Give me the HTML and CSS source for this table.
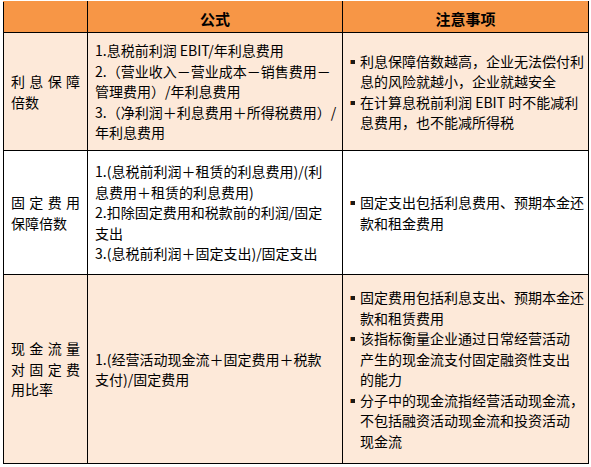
FILE: index.html
```html
<!DOCTYPE html>
<html lang="zh">
<head>
<meta charset="utf-8">
<link rel="stylesheet" href="styles.css">
</head>
<body>
<table class="grid">
  <colgroup>
    <col class="c1"><col class="c2"><col class="c3">
  </colgroup>
  <thead>
    <tr class="head">
      <th></th>
      <th>公式</th>
      <th>注意事项</th>
    </tr>
  </thead>
  <tbody>
    <tr class="row r1 peach">
      <td class="name">利息保障倍数</td>
      <td class="formula"><span class="ln">1.息税前利润 EBIT/年利息费用</span><span class="ln">2.（营业收入－营业成本－销售费用－</span><span class="ln">管理费用）/年利息费用</span><span class="ln">3.（净利润＋利息费用＋所得税费用）/</span><span class="ln">年利息费用</span></td>
      <td class="notes">
        <ul class="bl">
          <li><span class="ln">利息保障倍数越高，企业无法偿付利</span><span class="ln">息的风险就越小，企业就越安全</span></li>
          <li><span class="ln">在计算息税前利润 EBIT 时不能减利</span><span class="ln">息费用，也不能减所得税</span></li>
        </ul>
      </td>
    </tr>
    <tr class="row r2 white">
      <td class="name">固定费用保障倍数</td>
      <td class="formula"><span class="ln">1.(息税前利润＋租赁的利息费用)/(利</span><span class="ln">息费用＋租赁的利息费用)</span><span class="ln">2.扣除固定费用和税款前的利润/固定</span><span class="ln">支出</span><span class="ln">3.(息税前利润＋固定支出)/固定支出</span></td>
      <td class="notes">
        <ul class="bl">
          <li><span class="ln">固定支出包括利息费用、预期本金还</span><span class="ln">款和租金费用</span></li>
        </ul>
      </td>
    </tr>
    <tr class="row r3 peach">
      <td class="name">现金流量对固定费用比率</td>
      <td class="formula"><span class="ln">1.(经营活动现金流＋固定费用＋税款</span><span class="ln">支付)/固定费用</span></td>
      <td class="notes">
        <ul class="bl">
          <li><span class="ln">固定费用包括利息支出、预期本金还</span><span class="ln">款和租赁费用</span></li>
          <li><span class="ln">该指标衡量企业通过日常经营活动</span><span class="ln">产生的现金流支付固定融资性支出</span><span class="ln">的能力</span></li>
          <li><span class="ln">分子中的现金流指经营活动现金流，</span><span class="ln">不包括融资活动现金流和投资活动</span><span class="ln">现金流</span></li>
        </ul>
      </td>
    </tr>
  </tbody>
</table>
</body>
</html>
```

FILE: styles.css
```css
html, body {
  margin: 0;
  padding: 0;
  background: #ffffff;
}

body {
  padding: 1px 0 0 3px;
  font-family: "Noto Sans CJK SC", "Noto Sans", sans-serif;
  font-size: 14px;
  color: #000000;
}

.grid {
  border-collapse: collapse;
  table-layout: fixed;
  width: 585px;
}

.c1 { width: 84px; }
.c2 { width: 255px; }
.c3 { width: 246px; }

.grid th,
.grid td {
  border: 1px solid #000000;
  vertical-align: middle;
  line-height: 20.5px;
  padding: 0 7px;
}

.head th {
  background: #f79646;
  height: 31px;
  font-size: 15px;
  font-weight: bold;
  text-align: center;
  border-top: 1px solid #f79646;
  padding-top: 5px;
  padding-bottom: 0;
  box-sizing: border-box;
}

.peach td { background: #fde9d9; }
.white td { background: #ffffff; }

.r1 td { height: 117px; }
.r2 td { height: 123px; }
.r3 td { height: 188px; }

.name {
  text-align: justify;
  text-justify: inter-character;
  padding-left: 8px;
  padding-right: 7px;
  line-height: 21px;
}

.formula {
  padding-left: 6px;
  white-space: nowrap;
}

.ln { display: block; }

.notes {
  padding-left: 8px;
  white-space: nowrap;
}

.bl {
  list-style: none;
  margin: 0;
  padding: 0;
}

.bl li {
  position: relative;
  padding-left: 10px;
}

.bl li::before {
  content: "";
  position: absolute;
  left: 1px;
  top: 9px;
  width: 4px;
  height: 4px;
  background: #1a1a1a;
  box-shadow: -1px 0 0 #e07a2a;
}
```
